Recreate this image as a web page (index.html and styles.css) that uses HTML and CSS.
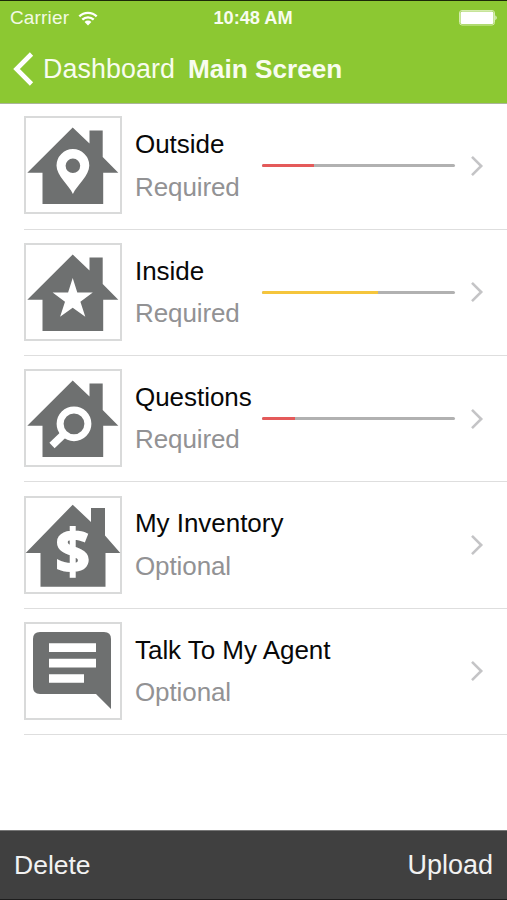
FILE: index.html
```html
<!DOCTYPE html>
<html lang="en">
<head>
<meta charset="utf-8">
<title>Main Screen</title>
<link rel="stylesheet" href="styles.css">
</head>
<body>
<svg class="defs" aria-hidden="true">
  <symbol id="house" viewBox="24 116 98 98"><path d="M72.7 127.5 89.5 143.5V130.5H102.7V157L118.3 172.8H103.2V204H42.5V172.8H27.3Z"/></symbol>
  <symbol id="chevron" viewBox="0 0 14 22"><path d="M2 1.8 11.2 11 2 20.2"/></symbol>
</svg>
<div class="screen">
  <header class="header">
    <div class="status">
      <div class="carrier"><span>Carrier</span>
        <svg class="wifi" viewBox="0 0 20 15"><path class="arc" d="M1.3 5.4a12.4 12.4 0 0 1 17.4 0M4.3 8.6a8.2 8.2 0 0 1 11.4 0"/><path class="dot" d="M6.6 10.9a4.8 4.8 0 0 1 6.8 0L10 14.4Z"/></svg>
      </div>
      <div class="time">10:48 AM</div>
      <svg class="battery" viewBox="0 0 39 16"><rect class="shell" x=".5" y=".5" width="35" height="14.5" rx="2.5"/><rect x="1.5" y="1.5" width="33" height="12.5" rx="1.5"/><path d="M36.5 5.2q2.2 2.5 0 5z"/></svg>
    </div>
    <nav class="nav">
      <svg class="back" viewBox="0 0 22 34"><path d="M18.5 2 3.5 17 18.5 32"/></svg>
      <span class="parent">Dashboard</span>
      <h1 class="title">Main Screen</h1>
    </nav>
  </header>
  <main class="list">
    <div class="row">
      <div class="thumb"><svg viewBox="24 116 98 98"><use href="#house" x="24" y="116" width="98" height="98"/><path class="cut" fill-rule="evenodd" d="M72.9 194C69 185 56.5 176 56.5 165.500a16.400 16.400 0 0 1 32.800 0C89.300 176 77 185 72.900 194ZM72.900 158.500a7.300 7.300 0 1 0 0 14.600a7.300 7.300 0 0 0 0-14.600Z"/></svg></div>
      <div class="label"><div class="name">Outside</div><div class="note">Required</div></div>
      <div class="track"><div class="fill red" style="width:27.2%"></div></div>
      <svg class="chevron"><use href="#chevron"/></svg>
    </div>
    <div class="row">
      <div class="thumb"><svg viewBox="24 116 98 98"><use href="#house" x="24" y="116" width="98" height="98"/><path class="cut" d="M72.700 151 77.300 165.500H92.800L80.400 174.800 85.300 189.700 72.700 180.700 60.100 189.700 65 174.800 52.600 165.500H68.100Z"/></svg></div>
      <div class="label"><div class="name">Inside</div><div class="note">Required</div></div>
      <div class="track"><div class="fill yellow" style="width:60%"></div></div>
      <svg class="chevron"><use href="#chevron"/></svg>
    </div>
    <div class="row">
      <div class="thumb"><svg viewBox="24 116 98 98"><use href="#house" x="24" y="116" width="98" height="98"/><circle class="lens" cx="74" cy="170.800" r="13.900"/><path class="handle" d="M64 181 52 192.500"/></svg></div>
      <div class="label"><div class="name">Questions</div><div class="note">Required</div></div>
      <div class="track"><div class="fill red" style="width:17.3%"></div></div>
      <svg class="chevron"><use href="#chevron"/></svg>
    </div>
    <div class="row">
      <div class="thumb"><svg viewBox="24 116 98 98"><path d="M72.700 124.700 91 142V128H105V155.500L120.300 173H105.500V206.700H40.500V173H25.700Z"/><text class="dollar" x="72.700" y="193">$</text></svg></div>
      <div class="label"><div class="name">My Inventory</div><div class="note">Optional</div></div>
      <svg class="chevron"><use href="#chevron"/></svg>
    </div>
    <div class="row">
      <div class="thumb"><svg viewBox="24 116 98 98"><path d="M40 126H104Q111 126 111 133V203L96 188H40Q33 188 33 181V133Q33 126 40 126Z"/><path class="cut" d="M49 137.300H96V146H49ZM49 152.800H96V161.500H49ZM49 168.300H84V176.800H49Z"/></svg></div>
      <div class="label"><div class="name">Talk To My Agent</div><div class="note">Optional</div></div>
      <svg class="chevron"><use href="#chevron"/></svg>
    </div>
  </main>
  <footer class="toolbar"><span>Delete</span><span class="upload">Upload</span></footer>
</div>
</body>
</html>
```
FILE: styles.css
```css
* { box-sizing: border-box; }
body { margin: 0; font-family: "Liberation Sans", Arial, sans-serif; background: #fff; }
.defs { position: absolute; width: 0; height: 0; }
.screen { width: 507px; height: 900px; display: flex; flex-direction: column; overflow: hidden; }
.header { height: 104px; flex: none; background: #8cc832; border-top: 1px solid #1c2a08; border-bottom: 1px solid #aab59a; color: #fff; }
.status { height: 34px; display: grid; grid-template-columns: 1fr auto 1fr; align-items: center; padding: 0 9px 0 10px; }
.carrier { display: flex; align-items: center; gap: 9px; font-size: 19px; letter-spacing: .15px; color: #f3fae5; }
.wifi { width: 20px; height: 15px; }
.wifi .arc { fill: none; stroke: #fff; stroke-width: 2.3; }
.wifi .dot { fill: #fff; }
.time { font-size: 18.200px; font-weight: 700; color: #f8fcef; margin-left: -2px; }
.battery { width: 39px; height: 16px; fill: #fff; justify-self: end; }
.battery .shell { fill: none; stroke: #d5ecae; }
.nav { height: 68px; display: flex; align-items: center; padding-left: 13px; }
.back { width: 22px; height: 34px; fill: none; stroke: #fff; stroke-width: 4.600; margin-bottom: 1px; }
.parent { font-size: 26.800px; letter-spacing: .1px; margin-left: 8px; color: #f8fcef; }
.title { margin: 0 0 0 13px; font-size: 26.200px; font-weight: 700; color: #f8fcef; }
.list { flex: 1; margin-top: -.8px; }
.row { height: 126.400px; margin-left: 24px; display: flex; align-items: center; border-bottom: 1px solid #dedede; padding: 0 23px 0 0; }
.thumb { width: 98px; height: 98px; flex: none; border: 2px solid #d9dada; margin-bottom: 1px; }
.thumb svg { display: block; width: 98px; height: 98px; margin: -2px; fill: #6e7070; }
.thumb .cut { fill: #fff; }
.thumb .lens { fill: none; stroke: #fff; stroke-width: 7; }
.thumb .handle { stroke: #fff; stroke-width: 7.500; }
.thumb .dollar { font: 700 61px "Open Sans", sans-serif; fill: #fff; stroke: #fff; stroke-width: 1.800; text-anchor: middle; }
.label { width: 126px; flex: none; margin: 0 0 1px 13px; white-space: nowrap; font-size: 26px; line-height: 30px; }
.name { color: #080808; letter-spacing: -.04px; }
.note { color: #929294; margin-top: 12.500px; letter-spacing: -.1px; }
.track { width: 193px; height: 3px; margin-left: 1px; border-radius: 2px; background: #b1b1b1; overflow: hidden; }
.fill { height: 100%; }
.red { background: #e45a5a; }
.yellow { background: #f5c53c; }
.chevron { width: 14px; height: 22px; margin: 0 0 0 auto; fill: none; stroke: #c4c4c6; stroke-width: 2.600; }
.toolbar { height: 70px; flex: none; display: flex; align-items: center; justify-content: space-between; padding: 0 14px; background: #404040; border-top: 1px solid #777; border-bottom: 1px solid #1d1d1d; color: #f2f2f2; font-size: 26.500px; }
.upload { font-size: 27px; }
```
